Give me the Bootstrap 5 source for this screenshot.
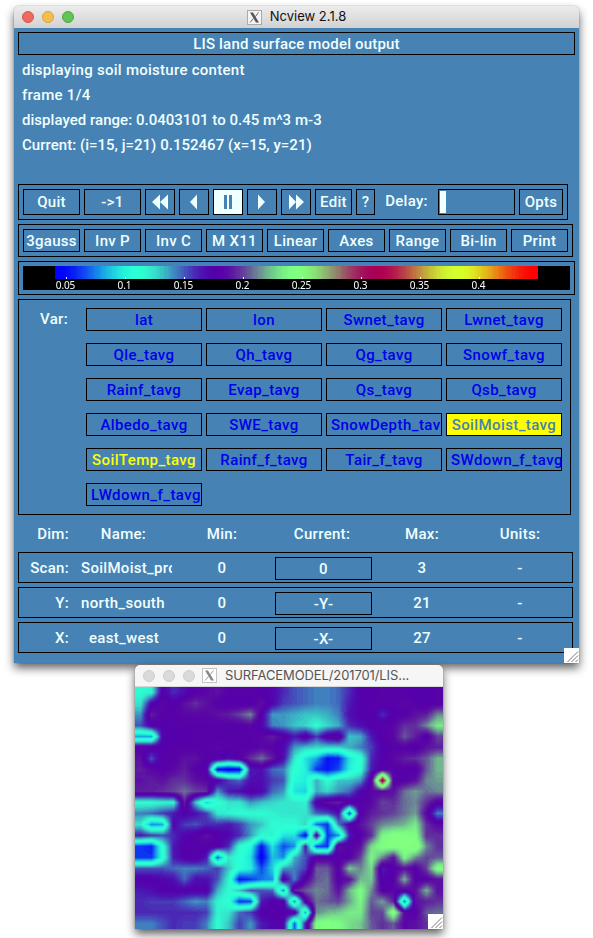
<!DOCTYPE html>
<html lang="en">
<head>
<meta charset="utf-8">
<title>Ncview 2.1.8</title>
<link href="https://cdn.jsdelivr.net/npm/bootstrap@5.3.0/dist/css/bootstrap.min.css" rel="stylesheet">
<style>
body{background:#fff;width:593px;height:938px;overflow:hidden;font-family:Roboto,"Liberation Sans",sans-serif}
.win{box-shadow:0 0 1px rgba(0,0,0,.6),0 5px 10px rgba(0,0,0,.62);border-radius:5px 5px 0 0}
.main-win{width:565px;height:657px;margin:6px 0 0 14px}
.titlebar{height:22px;font-size:13px;color:#111;background:linear-gradient(#ececec,#d2d2d2);border-radius:5px 5px 0 0;font-family:Inter,Roboto,sans-serif;letter-spacing:0}
.titlebar .dots{left:8px;top:5px;gap:8px}
.dot{width:12px;height:12px;border-radius:50%;border:1px solid}
.dot.r{background:#ee6a5f;border-color:#d9564c}
.dot.y{background:#f5bf4c;border-color:#dba23a}
.dot.g{background:#61c454;border-color:#4fa73e}
.dot.n{background:#dadada;border-color:#cdcdcd}
.xic{width:15px;height:15px}
.pane{background:#4682b4;height:635px;padding:4px;color:#f0ffff;font-size:15px;font-weight:500;line-height:21px;letter-spacing:.3px}
.bx{border:1px solid #000}
.heading{height:23px;width:557px;letter-spacing:.18px;padding-top:1px}
.msgs{height:129px;padding:3px 4px 0}
.msgs div{height:25px;line-height:25px;letter-spacing:.27px}
.msgs .nums{letter-spacing:.03px}
.tb{padding:4px;gap:4px}
.xbtn{background:transparent;color:inherit;border:1px solid #000;border-radius:0;padding:0;font:inherit;letter-spacing:inherit;white-space:nowrap;overflow:hidden;display:flex;align-items:center;justify-content:center;flex:none}
.tb1{width:550px;height:36px}
.tb1 .xbtn{height:26px}
.tb2{width:555px;height:33px;margin-top:4px}
.tb2 .xbtn{padding-top:1px}
.w57{width:57px}.w30{width:30px}.w37{width:37px}.w19{width:19px}.w44{width:44px}
.on{background:#f0ffff;color:#4682b4}
.delay{width:55px;text-align:center;line-height:25px}
.field{width:77px;height:26px;padding:1px}
.caret{width:6px;height:22px;background:#f0ffff}
.scale{width:557px;height:34px;padding:4px;margin-top:4px}
.scale-in{background:#000;height:24px;color:#fff;font:400 10px/12px "Noto Sans",sans-serif;letter-spacing:-.1px}
.scale-in canvas{display:block;margin-left:32px;width:483px;height:13px}
.ticks{margin:-2px 0 0 14px}
.tick{width:59px;text-align:center}
.tick i{display:block;width:1px;height:2px;background:#fff;margin:0 auto}
.tick span{margin-left:-2px}
.vars{width:553px;height:216px;margin-top:4px;padding:8px}
.vlab{width:59px;padding-left:13px;line-height:22px}
.vgrid{display:grid;grid-template-columns:repeat(4,116px);grid-auto-rows:23px;column-gap:4px;row-gap:12px;color:#0000e8;align-content:start}
.vgrid .xbtn{width:116px;letter-spacing:.4px;padding-top:2px}
.vgrid .wide{justify-content:flex-start;padding-left:4px;letter-spacing:.45px}
.vgrid .sel{background:#ff0;color:#4682b4}
.vgrid .seen{color:#ff0}
.dimhead{height:37px;width:555px;padding:2px 1px 0}
.dimrow{width:555px;height:31px;margin-bottom:4px}
.dimrow .c0,.dimrow .c1,.dimrow .c2{padding-top:1px}
.c0{width:50px;text-align:right;flex:none}
.c1{width:103px;padding-left:12px;flex:none}
.dimhead .c1 div{margin-left:-3px}
.c1 div{width:91px;overflow:hidden;white-space:nowrap;text-align:center}
.dimrow .c1 div{padding-right:5px}
.dimrow .c1 .cut{text-align:left;padding-right:0}
.c2{width:100px;text-align:center;flex:none}
.c2:last-child{margin-left:-2px}
.cc{width:97px;flex:none;margin:0 0 0 3px}
.cc .xbtn{width:97px;height:23px;margin-top:1px;padding-top:2px}
.grip{right:0;bottom:0;width:15px;height:15px}
.map-win{width:308px;height:264px;margin:2px 0 0 135px;position:relative}
.map-win .titlebar{background:#f6f6f6;color:#555;border-bottom:1px solid #d8d8d8;letter-spacing:-.1px}
.map-win .xic{margin-left:67px}
.map-win canvas{display:block;width:308px;height:242px}
</style>
</head>
<body>
<div class="win main-win position-relative">
  <div class="titlebar position-relative d-flex align-items-center justify-content-center">
    <div class="dots position-absolute d-flex"><span class="dot r"></span><span class="dot y"></span><span class="dot g"></span></div>
    <svg class="xic" viewBox="0 0 15 15"><rect x=".5" y=".5" width="14" height="14" fill="#f3f3f3" stroke="#aaa"/><path d="M3 2.500h3L12 12.500H9z" fill="#555"/><path d="M11.500 2.500L8.300 6.700M6.500 8.500L3 12.500" stroke="#666" fill="none"/></svg>
    <span class="ms-1 ps-1">Ncview 2.1.8</span>
  </div>
  <div class="pane">
    <div class="bx heading text-center">LIS land surface model output</div>
    <div class="msgs">
      <div>displaying soil moisture content</div>
      <div>frame 1/4</div>
      <div class="nums">displayed range: 0.0403101 to 0.45 m^3 m-3</div>
      <div class="nums">Current: (i=15, j=21) 0.152467 (x=15, y=21)</div>
    </div>
    <div class="bx tb tb1 d-flex">
      <button class="xbtn w57">Quit</button>
      <button class="xbtn w57">-&gt;1</button>
      <button class="xbtn w30"><svg width="28" height="24" fill="#f0ffff"><path d="M14 4.500v15L6 12zM22 4.500v15L14 12z"/></svg></button>
      <button class="xbtn w30"><svg width="28" height="24" fill="#f0ffff"><path d="M17 4.500v15L10 12z"/></svg></button>
      <button class="xbtn w30 on"><svg width="28" height="24" fill="#4682b4"><path d="M10 5h3v14h-3zM15 5h3v14h-3z"/></svg></button>
      <button class="xbtn w30"><svg width="28" height="24" fill="#f0ffff"><path d="M10 4.500v15L17 12z"/></svg></button>
      <button class="xbtn w30"><svg width="28" height="24" fill="#f0ffff"><path d="M7 4.500v15L14 12zM14 4.500v15L22 12z"/></svg></button>
      <button class="xbtn w37">Edit</button>
      <button class="xbtn w19">?</button>
      <div class="delay">Delay:</div>
      <div class="bx field"><div class="caret"></div></div>
      <button class="xbtn w44">Opts</button>
    </div>
    <div class="bx tb tb2 d-flex">
      <button class="xbtn w57">3gauss</button><button class="xbtn w57">Inv P</button><button class="xbtn w57">Inv C</button><button class="xbtn w57">M X11</button><button class="xbtn w57">Linear</button><button class="xbtn w57">Axes</button><button class="xbtn w57">Range</button><button class="xbtn w57">Bi-lin</button><button class="xbtn w57">Print</button>
    </div>
    <div class="bx scale"><div class="scale-in">
      <canvas id="bar" width="483" height="13"></canvas>
      <div class="ticks d-flex position-relative">
        <div class="tick"><i></i><span>0.05</span></div><div class="tick"><i></i><span>0.1</span></div><div class="tick"><i></i><span>0.15</span></div><div class="tick"><i></i><span>0.2</span></div><div class="tick"><i></i><span>0.25</span></div><div class="tick"><i></i><span>0.3</span></div><div class="tick"><i></i><span>0.35</span></div><div class="tick"><i></i><span>0.4</span></div>
      </div></div>
    </div>
    <div class="bx vars d-flex">
      <div class="vlab">Var:</div>
      <div class="vgrid">
        <button class="xbtn">lat</button><button class="xbtn">lon</button><button class="xbtn">Swnet_tavg</button><button class="xbtn">Lwnet_tavg</button>
        <button class="xbtn">Qle_tavg</button><button class="xbtn">Qh_tavg</button><button class="xbtn">Qg_tavg</button><button class="xbtn">Snowf_tavg</button>
        <button class="xbtn">Rainf_tavg</button><button class="xbtn">Evap_tavg</button><button class="xbtn">Qs_tavg</button><button class="xbtn">Qsb_tavg</button>
        <button class="xbtn">Albedo_tavg</button><button class="xbtn">SWE_tavg</button><button class="xbtn wide">SnowDepth_tav</button><button class="xbtn sel">SoilMoist_tavg</button>
        <button class="xbtn seen">SoilTemp_tavg</button><button class="xbtn">Rainf_f_tavg</button><button class="xbtn">Tair_f_tavg</button><button class="xbtn wide">SWdown_f_tavg</button>
        <button class="xbtn wide">LWdown_f_tavg</button>
      </div>
    </div>
    <div class="dimhead d-flex align-items-center">
      <div class="c0">Dim:</div><div class="c1"><div>Name:</div></div><div class="c2">Min:</div><div class="c2">Current:</div><div class="c2">Max:</div><div class="c2">Units:</div>
    </div>
    <div class="bx dimrow d-flex align-items-center">
      <div class="c0">Scan:</div><div class="c1"><div class="cut">SoilMoist_pro</div></div><div class="c2">0</div><div class="cc"><button class="xbtn">0</button></div><div class="c2">3</div><div class="c2">-</div>
    </div>
    <div class="bx dimrow d-flex align-items-center">
      <div class="c0">Y:</div><div class="c1"><div class="cut">north_south</div></div><div class="c2">0</div><div class="cc"><button class="xbtn">-Y-</button></div><div class="c2">21</div><div class="c2">-</div>
    </div>
    <div class="bx dimrow d-flex align-items-center">
      <div class="c0">X:</div><div class="c1"><div>east_west</div></div><div class="c2">0</div><div class="cc"><button class="xbtn">-X-</button></div><div class="c2">27</div><div class="c2">-</div>
    </div>
  </div>
  <svg class="grip position-absolute" viewBox="0 0 15 15"><rect width="15" height="15" fill="#fff"/><path d="M3.500 14L14 3.500M7.500 14L14 7.500M11.500 14L14 11.500" stroke="#777"/></svg>
</div>
<div class="win map-win">
  <div class="titlebar position-relative d-flex align-items-center">
    <div class="dots position-absolute d-flex"><span class="dot n"></span><span class="dot n"></span><span class="dot n"></span></div>
    <svg class="xic" viewBox="0 0 15 15"><rect x=".5" y=".5" width="14" height="14" fill="#fff" stroke="#c4c4c4"/><path d="M3 2.500h3L12 12.500H9z" fill="#888"/><path d="M11.500 2.500L8.300 6.700M6.500 8.500L3 12.500" stroke="#999" fill="none"/></svg>
    <span class="ms-1 ps-1">SURFACEMODEL/201701/LIS...</span>
  </div>
  <canvas id="map" width="308" height="242"></canvas>
  <svg class="grip position-absolute" viewBox="0 0 15 15"><rect width="15" height="15" fill="#fff"/><path d="M3.500 14L14 3.500M7.500 14L14 7.500M11.500 14L14 11.500" stroke="#777"/></svg>
</div>
<script src="https://cdn.jsdelivr.net/npm/bootstrap@5.3.0/dist/js/bootstrap.bundle.min.js"></script>
<script>
// "3gauss" colormap: red rises, blue falls, green has three humps
function colour(t){
  t=Math.round(t*200)/200;
  const s=Math.sin(3*Math.PI*t);
  return [255*t,255*s*s,255*(1-t)];
}
function paint(id,f){
  const c=document.getElementById(id),g=c.getContext('2d'),im=g.createImageData(c.width,c.height);
  for(let y=0,k=0;y<c.height;y++)for(let x=0;x<c.width;x++){
    const q=colour(f(x,y));
    im.data[k++]=q[0];im.data[k++]=q[1];im.data[k++]=q[2];im.data[k++]=255;
  }
  g.putImageData(im,0,0);
}
paint('bar',x=>x/482);
// soil moisture grid, 28 x 22, in percent of the displayed range
const grid=`
18 19 33 29 31 34 35 36 34 34 34 33 32 29 27 26 25 25 26 29 33 33 34 34 34 33 33 34
20 32 35 33 36 38 36 34 33 33 33 36 32 28 27 26 25 25 26 30 33 34 34 34 35 34 33 34
24 37 34 34 35 35 35 36 37 39 42 33 24 24 23 22 22 23 25 31 33 34 29 33 34 36 37 42
27 33 33 34 34 34 34 34 34 34 35 32 25 24 22 21 18 21 23 29 31 33 34 35 38 38 42 47
10 10 32 33 33 34 34 34 34 34 34 35 37 34 30 34 28 34 35 22 23 30 34 35 40 37 33 39
34 34 33 34 34 34 34 35 34 34 34 35 34 32 24 22 21 21 21 23 25 28 33 34 34 33 36 37
36 27 34 34 36 36 34 34 31 34 38 41 37 31 20 13 10 03 04 13 17 29 33 35 37 38 40 44
37 35 34 35 37 34 33 03 01 02 30 31 26 25 17 14 05 03 06 14 18 30 34 34 34 33 40 44
36 37 36 38 38 36 35 33 28 26 31 31 28 27 15 14 23 18 22 22 24 34 67 34 34 36 42 43
37 37 38 39 41 39 38 24 30 31 33 32 26 24 13 12 23 21 24 26 32 35 35 36 41 43 41 42
18 18 19 19 37 22 12 17 20 20 24 22 21 20 20 19 33 36 37 34 34 35 39 38 41 42 38 34
25 26 28 30 33 31 28 20 19 18 18 18 19 20 20 20 26 27 31 06 34 37 38 39 41 43 35 25
20 09 10 32 28 27 29 29 30 28 24 22 18 18 18 21 08 05 25 33 36 39 42 43 44 47 38 35
30 28 27 29 32 34 36 34 32 29 24 18 19 13 13 02 33 05 09 30 34 38 48 50 50 49 38 38
05 04 17 30 33 34 34 33 29 18 15 03 13 06 09 30 06 05 36 34 36 46 50 50 50 52 42 38
05 05 16 30 33 34 30 07 20 17 13 01 11 09 23 27 34 34 34 34 39 48 42 36 48 42 39 40
27 27 27 26 25 25 26 28 22 16 14 06 12 24 25 28 40 40 34 45 42 46 30 34 36 34 39 50
33 33 32 31 26 31 31 27 19 03 05 08 09 34 25 34 40 41 34 36 44 45 32 34 44 34 34 36
30 31 33 33 33 33 33 23 18 22 27 27 26 09 37 40 42 41 36 44 49 42 34 35 34 36 44 36
29 28 28 28 26 24 25 19 17 05 06 30 33 33 09 33 41 40 39 43 48 40 43 37 08 36 37 38
29 29 29 29 29 29 28 19 20 26 28 33 34 33 34 10 42 44 45 47 47 39 39 51 35 34 40 41
25 25 27 29 28 28 25 18 22 28 24 30 32 32 07 30 49 50 49 46 45 40 38 40 35 36 38 38
`.trim().split('\n').map(r=>r.trim().split(/\s+/).map(v=>v/100));
paint('map',(px,py)=>{
  const x=Math.min(27,Math.max(0,(px-5)/11)),y=Math.min(21,Math.max(0,(py-5)/11));
  const i=Math.min(26,x|0),j=Math.min(20,y|0),a=x-i,b=y-j;
  return (grid[j][i]*(1-a)+grid[j][i+1]*a)*(1-b)+(grid[j+1][i]*(1-a)+grid[j+1][i+1]*a)*b;
});
</script>
</body>
</html>
